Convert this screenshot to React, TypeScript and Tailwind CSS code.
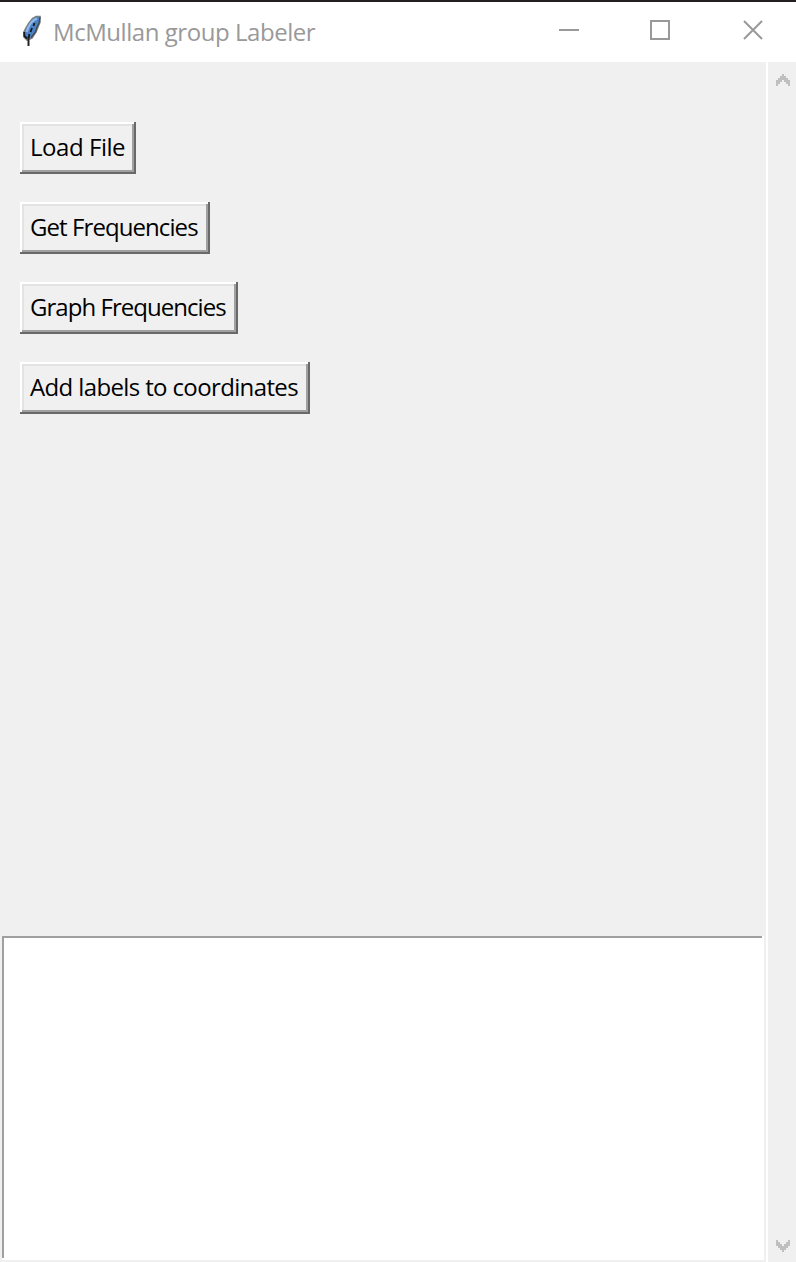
import React from "react";

const buttons = [
  { label: "Load File", box: "w-[116px]", text: "tracking-[-0.45px]" },
  { label: "Get Frequencies", box: "w-[190px]", text: "tracking-[-0.92px]" },
  { label: "Graph Frequencies", box: "w-[218px]", text: "tracking-[-0.96px]" },
  { label: "Add labels to coordinates", box: "w-[290px]", text: "tracking-[-0.63px]" },
];

function Feather() {
  return (
    <svg width="20" height="32" viewBox="0 0 20 32" className="block">
      <path d="M18 1.5 L14 1.5 L10.5 3.5 L7 8 L4 13 L2 17 L2 22 L5 25 L10 23 L14 17 L16 12 L18 7Z" fill="#4c84c8" stroke="#7b7f84" strokeWidth="1.6" />
      <path d="M15 3.5 C11 5 8 9 6.5 12 L4.5 17" fill="none" stroke="#8db8ea" strokeWidth="2.2" />
      <path d="M18 2 L17 8 L15 12 L13.5 17 L9 22.5" fill="none" stroke="#44484e" strokeWidth="1.3" />
      <path d="M12.5 8 L11.5 11 M10 13 L8.5 17 M2.2 17 L2.4 21 L5 23.5 M7.5 19 L6.5 23" fill="none" stroke="#15181d" strokeWidth="1.8" />
      <path d="M6.5 22 V31" stroke="#202226" strokeWidth="2" />
    </svg>
  );
}

function Chevron({ down = false }: { down?: boolean }) {
  return (
    <svg width="14" height="12" viewBox="0 0 14 12" fill="#bfbfbf" className={down ? "block -scale-y-100" : "block"}>
      <rect x="0" y="6" width="2" height="6" />
      <rect x="2" y="4" width="2" height="6" />
      <rect x="4" y="2" width="2" height="6" />
      <rect x="6" y="0" width="2" height="6" />
      <rect x="8" y="2" width="2" height="6" />
      <rect x="10" y="4" width="2" height="6" />
      <rect x="12" y="6" width="2" height="6" />
    </svg>
  );
}

export default function App() {
  return (
    <div className="flex h-[1262px] w-[796px] flex-col overflow-hidden bg-[#f0f0f0] font-['Open_Sans','Noto_Sans',sans-serif]">
      <header className="flex h-[62px] shrink-0 border-t-2 border-[#231f20] bg-white">
        <div className="ml-[22px] mt-[13px] w-[31px] shrink-0">
          <Feather />
        </div>
        <h1 className="mt-[14px] h-8 grow whitespace-nowrap text-[24px] leading-8 tracking-[-0.45px] text-[#999]">McMullan group Labeler</h1>
        <svg width="240" height="60" viewBox="556 2 240 60" className="shrink-0" fill="none" stroke="#999" strokeWidth="2">
          <path d="M559 30H579" />
          <path d="M651 21H669V39H651Z" />
          <path d="M744 21L762 39M762 21L744 39" />
        </svg>
      </header>
      <div className="flex min-h-0 grow">
        <main className="flex w-[766px] flex-col">
          <div className="flex grow flex-col items-start gap-7 pl-5 pt-[60px]">
            {buttons.map((b) => (
              <button
                key={b.label}
                className={`${b.box} h-[52px] pb-[2px] pl-[10px] text-left shadow-[inset_-2px_-2px_#696969,inset_2px_2px_#ffffff,inset_-4px_-4px_#a0a0a0,inset_4px_4px_#e3e3e3]`}
              >
                <span className={`${b.text} block whitespace-nowrap text-[24px] leading-8 text-black`}>{b.label}</span>
              </button>
            ))}
          </div>
          <div className="mb-[2px] ml-[2px] h-[324px] w-[762px] shrink-0 bg-white shadow-[inset_-2px_-2px_#ffffff,inset_2px_2px_#a0a0a0]" />
        </main>
        <aside className="flex w-[30px] flex-col items-center justify-between border-l-2 border-white pb-[10px] pl-[2px] pt-[12px]">
          <Chevron />
          <Chevron down />
        </aside>
      </div>
    </div>
  );
}
